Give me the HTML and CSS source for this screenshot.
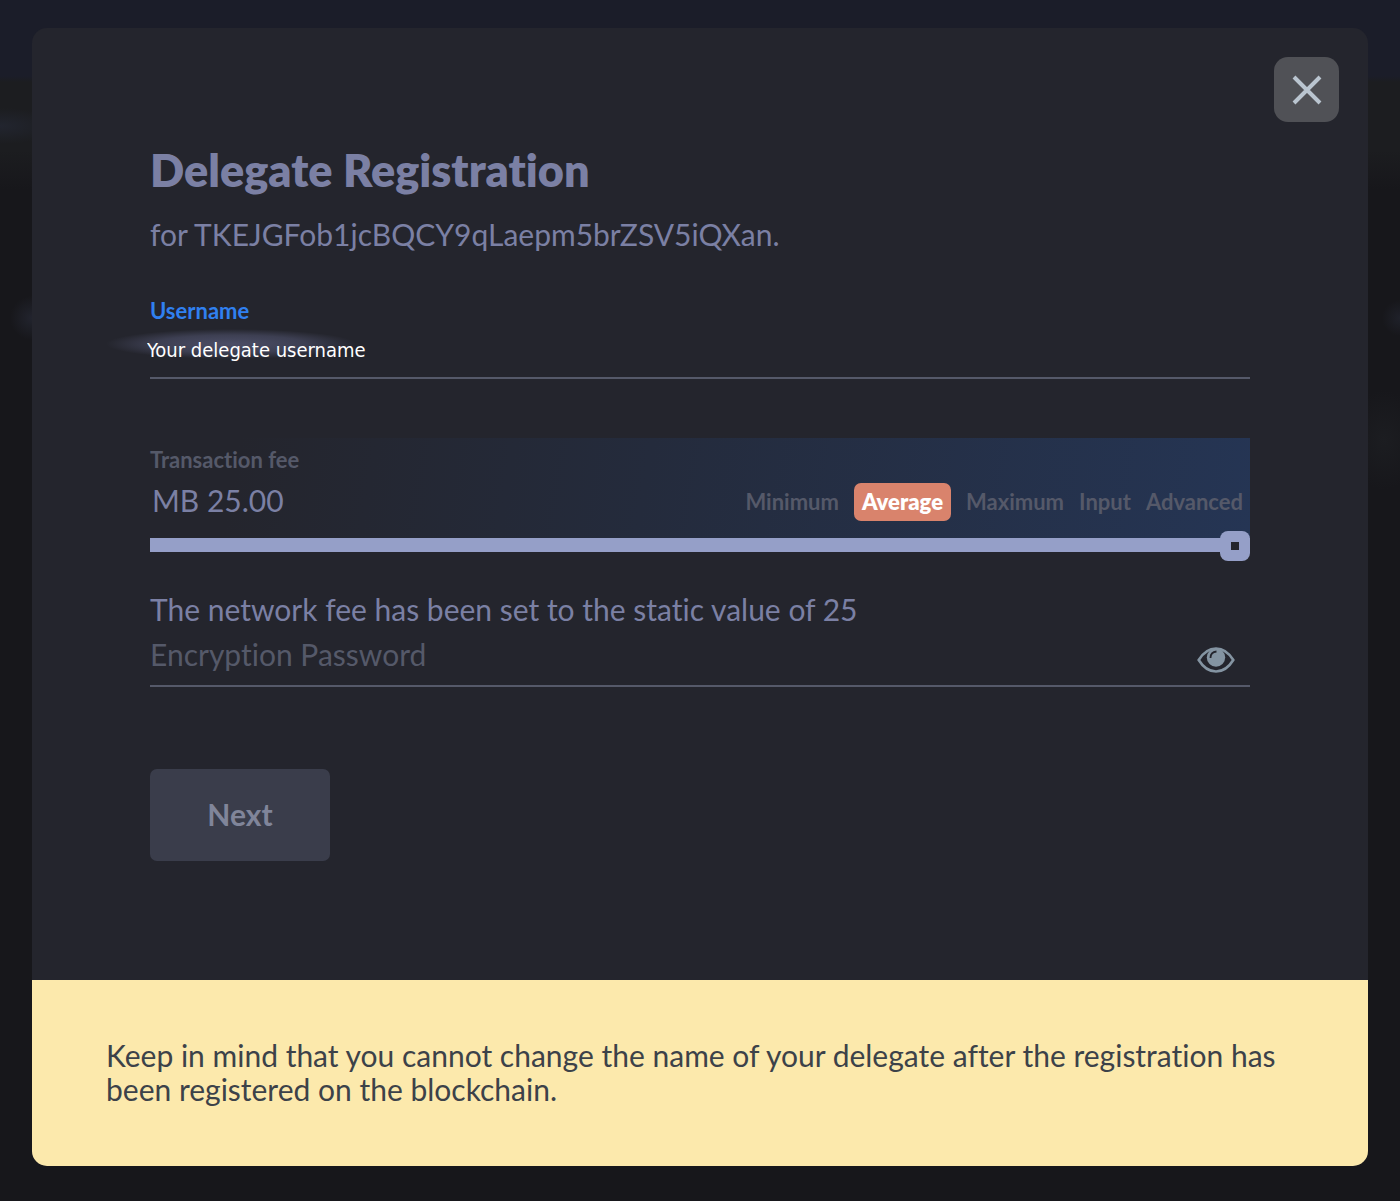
FILE: index.html
```html
<!DOCTYPE html>
<html lang="en">
<head>
<meta charset="utf-8">
<meta name="viewport" content="width=device-width, initial-scale=1">
<title>Delegate Registration</title>
<link rel="stylesheet" href="styles.css">
</head>
<body>
<main class="modal" role="dialog" aria-labelledby="title">
  <button class="close" type="button" aria-label="Close">
    <svg width="30" height="30" viewBox="0 0 30 30" fill="none" stroke="currentColor" stroke-width="4" aria-hidden="true"><path d="M2 2 28 28M28 2 2 28"/></svg>
  </button>
  <form class="form">
    <h1 class="title" id="title">Delegate Registration</h1>
    <p class="address">for TKEJGFob1jcBQCY9qLaepm5brZSV5iQXan.</p>

    <div class="field username">
      <label class="label label-active" for="username">Username</label>
      <input class="username-input" id="username" type="text" value="Your delegate username">
    </div>

    <div class="fee">
      <label class="label" for="fee">Transaction fee</label>
      <div class="fee-row">
        <input class="fee-input" id="fee" type="text" value="MB 25.00">
        <div class="choices">
          <button class="choice" type="button">Minimum</button>
          <button class="choice choice-active" type="button">Average</button>
          <button class="choice" type="button">Maximum</button>
          <button class="choice" type="button">Input</button>
          <button class="choice" type="button">Advanced</button>
        </div>
      </div>
    </div>
    <input class="slider" type="range" min="0" max="25" value="25" aria-label="Transaction fee amount">
    <p class="note">The network fee has been set to the static value of 25</p>

    <div class="field password">
      <input class="password-input" type="password" placeholder="Encryption Password" aria-label="Encryption Password">
      <button class="reveal" type="button" aria-label="Show password">
        <svg width="38" height="26" viewBox="0 0 38 26" aria-hidden="true">
          <path d="M1.700 13C6 6 12 1.500 19 1.500S32 6 36.300 13C32 20 26 24.500 19 24.500S6 20 1.700 13Z" fill="none" stroke="currentColor" stroke-width="2.600"/>
          <circle cx="19" cy="10.500" r="9.200" fill="currentColor"/>
          <path d="M13.500 11Q13.500 5 19.500 4.500" fill="none" stroke="#24252d" stroke-width="1.800"/>
        </svg>
      </button>
    </div>

    <button class="next" type="submit">Next</button>
  </form>
  <footer class="warning">Keep in mind that you cannot change the name of your delegate after the registration has been registered on the blockchain.</footer>
</main>
</body>
</html>
```
FILE: styles.css
```css
* { box-sizing: border-box; }

body {
  margin: 0;
  min-height: 100vh;
  padding: 28px 32px 36px;
  font-family: Lato, "Liberation Sans", sans-serif;
  font-variant-ligatures: none;
  color: #7b80a4;
  background:
    radial-gradient(ellipse 60px 18px at 0 126px, #22252f, transparent) no-repeat,
    radial-gradient(circle 22px at 32px 318px, #22242e, transparent) no-repeat,
    radial-gradient(circle 18px at 100% 318px, #1f212a, transparent) no-repeat,
    radial-gradient(ellipse 36px 50px at 1384px 440px, #1c1d21, transparent) no-repeat,
    linear-gradient(#1b1d29 76px, #1c1d20 82px, #1c1d20 150px, #17171b 190px);
}

button, input {
  font: inherit;
  font-variant-ligatures: none;
  color: inherit;
  border: 0;
  padding: 0;
  background: none;
}

button { cursor: pointer; }

.modal {
  position: relative;
  border-radius: 15px;
  overflow: hidden;
  background: #24252d;
}

.close {
  position: absolute;
  top: 29px;
  right: 29px;
  display: grid;
  place-items: center;
  width: 65px;
  height: 65px;
  border-radius: 14px;
  background: #505156;
  color: #bac5d0;
}

.form {
  display: flex;
  flex-direction: column;
  padding: 115px 118px 119px;
}

.title {
  margin: 0;
  font-size: 45px;
  line-height: 54px;
  font-weight: 800;
}

.address {
  margin: 19px 0 0;
  font-size: 30px;
  line-height: 36px;
}

.label {
  display: block;
  font-size: 22px;
  line-height: 28px;
  font-weight: 700;
  color: #555969;
}

.label-active { color: #3080f0; }

.field { border-bottom: 2px solid #555969; }

.username {
  position: relative;
  margin-top: 45px;
}

.username::before {
  content: "";
  position: absolute;
  left: -44px;
  top: 32px;
  width: 250px;
  height: 30px;
  border-radius: 50%;
  background: radial-gradient(closest-side, #4c4e67, #3d3f52 60%, transparent);
}

.username-input {
  position: relative;
  display: block;
  width: 100%;
  height: 52px;
  margin-left: -3px;
  padding-bottom: 2px;
  font-family: "DejaVu Sans Condensed", "Noto Sans", sans-serif;
  font-size: 20px;
  color: #fff;
}

.fee {
  height: 100px;
  margin-top: 59px;
  padding-top: 8px;
  background: linear-gradient(100deg, #24252d 8%, #242b3c 45%, #253554);
}

.fee-row {
  display: flex;
  justify-content: space-between;
  align-items: center;
  height: 56px;
  padding: 0 7px 0 2px;
}

.fee-input {
  width: 200px;
  padding-bottom: 4px;
  font-size: 30px;
}

.choices {
  display: flex;
  align-items: center;
  gap: 15px;
}

.choice {
  font-size: 22px;
  line-height: 38px;
  font-weight: 700;
  color: #555969;
}

.choice-active {
  padding: 0 8px;
  border-radius: 7px;
  background: #d9836c;
  color: #fff;
  font-weight: 800;
}

.slider {
  appearance: none;
  width: 100%;
  height: 30px;
  margin: -8px 0 0;
}

.slider::-webkit-slider-runnable-track {
  height: 14px;
  background: #959fc8;
}

.slider::-webkit-slider-thumb {
  appearance: none;
  width: 30px;
  height: 30px;
  margin-top: -7px;
  border-radius: 8px;
  background: linear-gradient(#24252d, #24252d) center / 8px 8px no-repeat #959fc8;
}

.note {
  margin: 31px 0 0;
  font-size: 30px;
  line-height: 36px;
}

.password {
  display: flex;
  align-items: center;
  height: 60px;
  padding-right: 15px;
}

.password-input {
  flex: 1;
  min-width: 0;
  height: 58px;
  padding-bottom: 4px;
  font-size: 30px;
}

.password-input::placeholder {
  color: #555969;
  opacity: 1;
}

.reveal {
  display: flex;
  padding-top: 8px;
  color: #8494a2;
}

.next {
  align-self: flex-start;
  width: 180px;
  height: 92px;
  margin-top: 82px;
  padding-bottom: 3px;
  border-radius: 7px;
  background: #3a3d4b;
  color: #80859a;
  font-size: 30px;
  font-weight: 700;
}

.warning {
  padding: 58px 74px 60px;
  background: #fce9ac;
  color: #3c4249;
  font-size: 30px;
  line-height: 34px;
}
```
